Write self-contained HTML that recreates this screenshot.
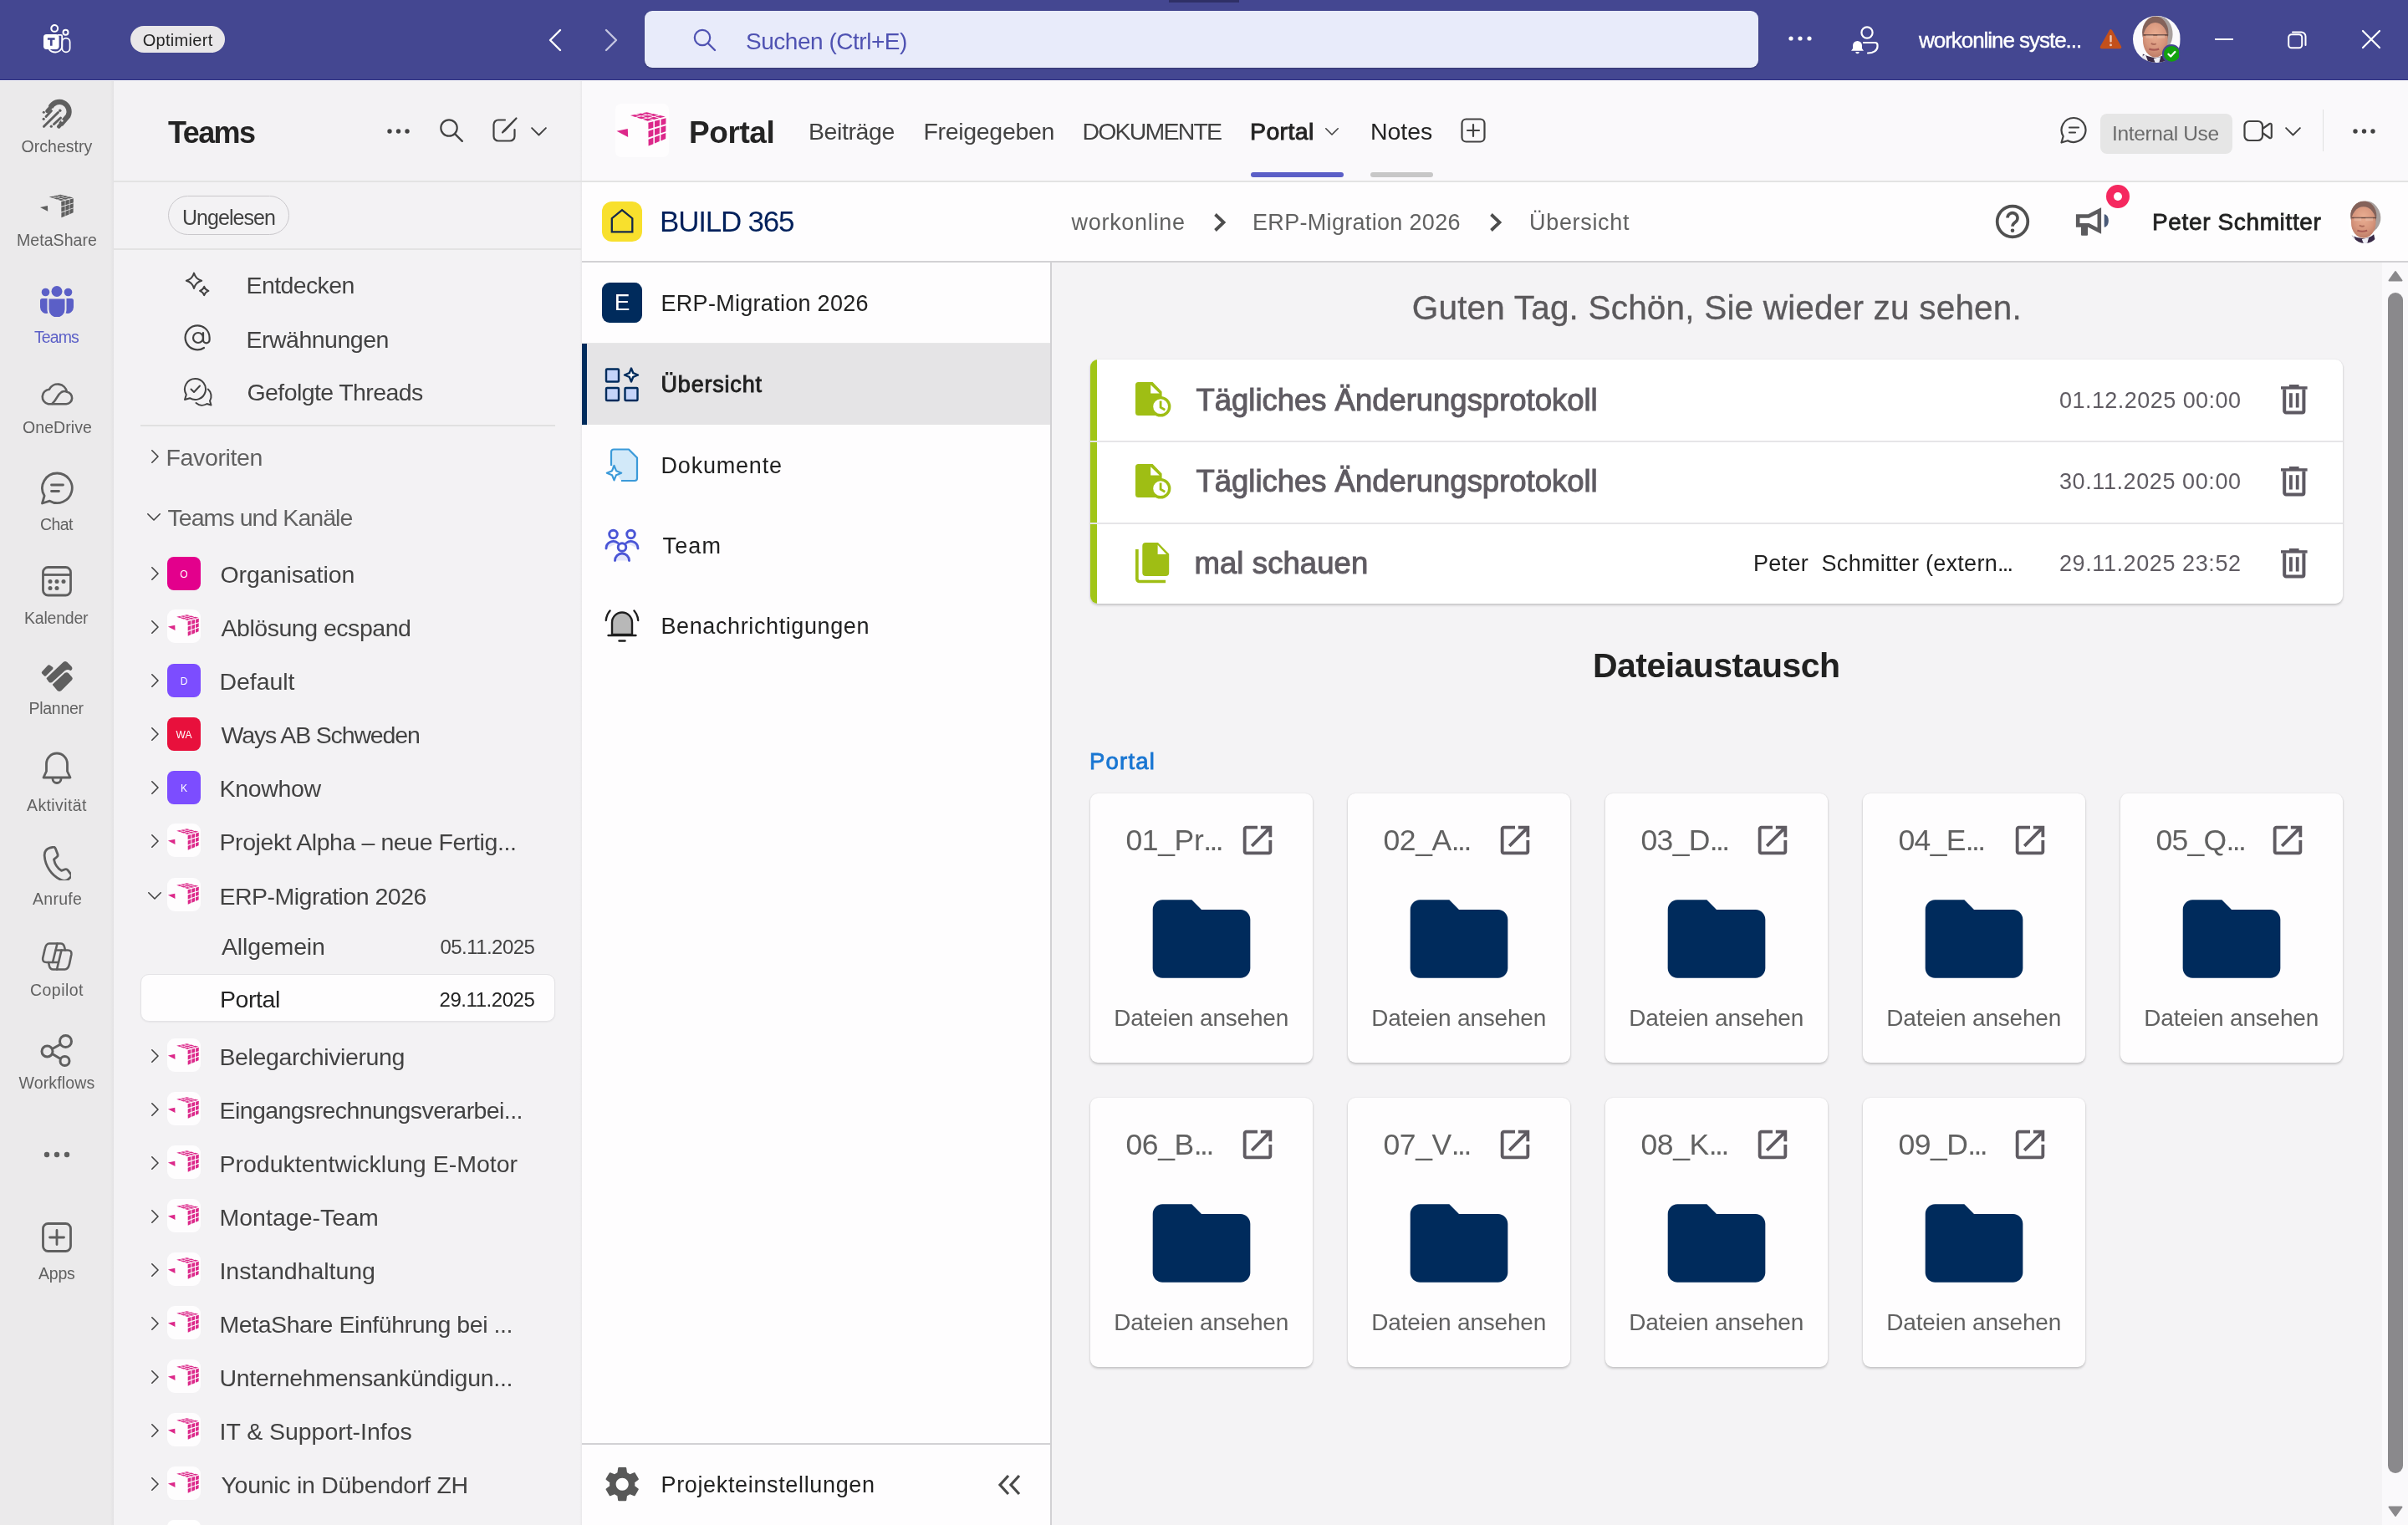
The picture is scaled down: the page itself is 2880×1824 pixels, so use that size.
<!DOCTYPE html><html><head><meta charset="utf-8"><title>Teams</title><style>
html,body{margin:0;padding:0;}html{width:2880px;height:1824px;overflow:hidden;}body{width:2880px;height:1824px;overflow:hidden;position:relative;background:#f5f5f5;font-family:"Liberation Sans",sans-serif;}
.t{position:absolute;white-space:pre;}
</style></head><body>
<svg width="0" height="0" style="position:absolute"><defs><symbol id="cubeP" viewBox="0 0 64 64"><g fill="#dc288a"><path d="M1.5 32.7 L14.8 29.9 L15.2 39.9 Z"/><path d="M17.92 14.10 L23.49 12.98 L29.46 14.77 L23.78 15.99 Z"/><path d="M25.34 16.49 L31.05 15.25 L37.02 17.03 L31.20 18.37 Z"/><path d="M32.75 18.87 L38.61 17.51 L44.58 19.29 L38.62 20.75 Z"/><path d="M24.97 12.69 L30.54 11.57 L36.65 13.23 L30.97 14.45 Z"/><path d="M32.57 14.92 L38.28 13.67 L44.39 15.34 L38.57 16.68 Z"/><path d="M40.16 17.14 L46.01 15.78 L52.13 17.44 L46.16 18.90 Z"/><path d="M32.02 11.27 L37.59 10.15 L43.85 11.69 L38.16 12.91 Z"/><path d="M39.80 13.34 L45.51 12.10 L51.76 13.64 L45.94 14.98 Z"/><path d="M47.57 15.42 L53.42 14.05 L59.67 15.59 L53.71 17.05 Z"/><path d="M39.40 22.66 L45.37 21.15 L45.38 28.80 L39.45 30.57 Z"/><path d="M39.46 32.68 L45.38 30.84 L45.39 38.49 L39.51 40.60 Z"/><path d="M39.52 42.70 L45.39 40.52 L45.39 48.18 L39.57 50.62 Z"/><path d="M46.96 20.75 L52.93 19.24 L52.89 26.56 L46.95 28.33 Z"/><path d="M46.95 30.35 L52.87 28.50 L52.83 35.82 L46.95 37.93 Z"/><path d="M46.95 39.95 L52.81 37.77 L52.77 45.09 L46.94 47.53 Z"/><path d="M54.52 18.83 L60.49 17.32 L60.39 24.31 L54.46 26.08 Z"/><path d="M54.45 28.01 L60.37 26.17 L60.27 33.16 L54.39 35.26 Z"/><path d="M54.37 37.19 L60.24 35.01 L60.14 42.00 L54.31 44.44 Z"/></g></symbol><symbol id="cubeG" viewBox="0 0 64 64"><g fill="#5e5e5e"><path d="M1.5 32.7 L14.8 29.9 L15.2 39.9 Z"/><path d="M17.35 14.07 L23.47 12.84 L30.04 14.80 L23.79 16.14 Z"/><path d="M24.77 16.46 L31.03 15.10 L37.60 17.05 L31.20 18.53 Z"/><path d="M32.18 18.84 L38.60 17.35 L45.17 19.31 L38.61 20.92 Z"/><path d="M24.40 12.66 L30.51 11.43 L37.24 13.25 L30.99 14.59 Z"/><path d="M31.99 14.89 L38.26 13.53 L44.98 15.35 L38.58 16.83 Z"/><path d="M39.58 17.12 L46.00 15.63 L52.72 17.45 L46.17 19.06 Z"/><path d="M31.44 11.24 L37.56 10.02 L44.43 11.71 L38.19 13.05 Z"/><path d="M39.21 13.32 L45.48 11.96 L52.36 13.65 L45.95 15.13 Z"/><path d="M46.98 15.40 L53.40 13.91 L60.28 15.59 L53.72 17.21 Z"/><path d="M39.10 22.34 L45.67 20.69 L45.67 29.09 L39.16 31.05 Z"/><path d="M39.17 32.38 L45.67 30.37 L45.68 38.76 L39.22 41.09 Z"/><path d="M39.23 42.42 L45.68 40.04 L45.68 48.44 L39.28 51.13 Z"/><path d="M46.67 20.44 L53.23 18.80 L53.18 26.83 L46.66 28.79 Z"/><path d="M46.66 30.06 L53.17 28.05 L53.11 36.08 L46.66 38.41 Z"/><path d="M46.66 39.68 L53.11 37.30 L53.05 45.33 L46.65 48.03 Z"/><path d="M54.23 18.55 L60.79 16.91 L60.68 24.57 L54.17 26.53 Z"/><path d="M54.16 27.74 L60.66 25.73 L60.55 33.40 L54.10 35.73 Z"/><path d="M54.09 36.94 L60.53 34.56 L60.42 42.22 L54.02 44.92 Z"/></g></symbol><symbol id="folder" viewBox="0 0 24 24"><path fill="#002b5c" d="M10 4H4c-1.1 0-1.99.9-1.99 2L2 18c0 1.1.9 2 2 2h16c1.1 0 2-.9 2-2V8c0-1.1-.9-2-2-2h-8l-2-2z"/></symbol><symbol id="openNew" viewBox="0 0 24 24"><path fill="#5f5b62" d="M19 19H5V5h7V3H5c-1.11 0-2 .9-2 2v14c0 1.1.89 2 2 2h14c1.1 0 2-.9 2-2v-7h-2v7zM14 3v2h3.59l-9.83 9.83 1.41 1.41L19 6.41V10h2V3h-7z"/></symbol><symbol id="trash" viewBox="0 0 32 36"><g fill="#5d5962"><rect x="0" y="2.200" width="31.600" height="3.400"/><rect x="10" y="0" width="11.600" height="3"/><rect x="10" y="10.200" width="3.800" height="17.300"/><rect x="17.800" y="10.200" width="3.800" height="17.300"/></g><path d="M4.200 5.500V31.400a2 2 0 0 0 2 2H25.400a2 2 0 0 0 2-2V5.500" fill="none" stroke="#5d5962" stroke-width="4"/></symbol><symbol id="chevR" viewBox="0 0 12 20"><path fill="none" stroke="#424242" stroke-width="1.8" stroke-linecap="round" stroke-linejoin="round" d="M2 2l8 8-8 8"/></symbol><symbol id="chevD" viewBox="0 0 20 12"><path fill="none" stroke="#424242" stroke-width="1.8" stroke-linecap="round" stroke-linejoin="round" d="M2 2l8 8 8-8"/></symbol></defs></svg>
<div style="position:absolute;left:0;top:0;width:2880px;height:1824px;overflow:hidden;will-change:transform;">
<div style="position:absolute;left:0px;top:0px;width:2880px;height:96px;background:#444791;"></div>
<div style="position:absolute;left:0px;top:96px;width:136px;height:1728px;background:linear-gradient(90deg,#ebeaeb 0,#ebeaeb 132px,#e2e1e3 136px);"></div>
<div style="position:absolute;left:136px;top:96px;width:559px;height:1728px;background:#f3f2f4;"></div>
<div style="position:absolute;left:695px;top:96px;width:2185px;height:121px;background:#faf9fb;"></div>
<div style="position:absolute;left:693px;top:96px;width:3px;height:1728px;background:linear-gradient(90deg,#f3f2f4,#e9e8ea);"></div>
<div style="position:absolute;left:136px;top:216px;width:2744px;height:2px;background:#e3e3e3;"></div>
<div style="position:absolute;left:0px;top:95px;width:2880px;height:1px;background:#2f3083;"></div>
<div style="position:absolute;left:0px;top:96px;width:2880px;height:1px;background:#fff;"></div>
<svg style="position:absolute;left:51.6px;top:29.2px;" width="34" height="35" viewBox="0 0 34 35"><g fill="none" stroke="#fff" stroke-width="1.800"><circle cx="13.200" cy="4.900" r="3.900" stroke-width="2.100"/><circle cx="26.500" cy="9.700" r="3" stroke-width="2"/><path d="M17 12.900h3.800a1.400 1.400 0 0 1 1.400 1.400v12.500a7.800 7.800 0 0 1-8 6.700c-3.200 0-5.800-1.300-7.600-3.600"/><rect x="22.300" y="16.600" width="9.300" height="16.700" rx="4.600"/></g><rect x="0" y="11.900" width="18.600" height="18" rx="3.600" fill="#fff"/><path d="M4.900 16.300h8.700v2.500h-3v6.900h-2.700v-6.900h-3z" fill="#444791"/></svg>
<div style="position:absolute;left:156px;top:30.7px;width:113.4px;height:32.4px;background:#e9e7e9;border-radius:17px;"></div>
<span class="t" style="top:35.0px;font-size:20px;line-height:26px;color:#242424;letter-spacing:0.304px;left:170.70px;">Optimiert</span>
<svg style="position:absolute;left:655px;top:34px;" width="18" height="28" viewBox="0 0 18 28"><path d="M15 2L3 14l12 12" fill="none" stroke="#fff" stroke-width="2.4" stroke-linecap="round" stroke-linejoin="round"/></svg>
<svg style="position:absolute;left:722px;top:34px;" width="18" height="28" viewBox="0 0 18 28"><path d="M3 2l12 12L3 26" fill="none" stroke="#c5c6e0" stroke-width="2.4" stroke-linecap="round" stroke-linejoin="round"/></svg>
<div style="position:absolute;left:771px;top:13px;width:1332px;height:68px;background:#e8ebfa;border-radius:9px;box-shadow:0 1px 2px rgba(0,0,0,.25);"></div>
<svg style="position:absolute;left:828px;top:33px;" width="30" height="30" viewBox="0 0 30 30"><circle cx="12" cy="12" r="9.2" fill="none" stroke="#4f52b2" stroke-width="2.2"/><path d="M19 19l8 8" stroke="#4f52b2" stroke-width="2.4" stroke-linecap="round"/></svg>
<span class="t" style="top:32.0px;font-size:28px;line-height:36px;color:#4f52b2;letter-spacing:-0.474px;left:892.00px;">Suchen (Ctrl+E)</span>
<div style="position:absolute;left:1398px;top:0px;width:84px;height:3px;background:#2f3066;"></div>
<svg style="position:absolute;left:2138px;top:41px;" width="30" height="10" viewBox="0 0 30 10"><circle cx="4" cy="5" r="2.6" fill="#fff"/><circle cx="15" cy="5" r="2.6" fill="#fff"/><circle cx="26" cy="5" r="2.6" fill="#fff"/></svg>
<svg style="position:absolute;left:2212px;top:30px;" width="38" height="36" viewBox="0 0 38 36"><circle cx="21" cy="9" r="6.6" fill="none" stroke="#fff" stroke-width="2.2"/><path d="M17 21h13.500a3 3 0 0 1 3 3v1.500c0 5-5 8-11.500 8" fill="none" stroke="#fff" stroke-width="2.2" stroke-linecap="round"/><path d="M9.500 19a5.500 5.500 0 0 1 5.500 5.500V28l2 2.800H2L4 28v-3.500A5.500 5.500 0 0 1 9.500 19zM7.300 32h4.400a2.200 2.200 0 0 1-4.400 0z" fill="#fff"/></svg>
<span class="t" style="top:31.0px;font-size:26px;line-height:34px;color:#fff;letter-spacing:-1.036px;left:2295.00px;-webkit-text-stroke:0.4px #fff;">workonline syste...</span>
<svg style="position:absolute;left:2510.5px;top:33.5px;" width="27" height="25" viewBox="0 0 27 25"><path d="M13.500 3L24.500 22.500H2.500z" fill="#c4501b" stroke="#c4501b" stroke-width="3.600" stroke-linejoin="round"/><rect x="12.300" y="8" width="2.400" height="8.500" rx="1" fill="#f0c8b4"/><circle cx="13.500" cy="19.800" r="1.500" fill="#f0c8b4"/></svg>
<div style="position:absolute;left:2551px;top:18.500px;width:56.500px;height:56.500px;border-radius:50%;overflow:hidden;"><svg width="56.500" height="56.500" viewBox="0 0 57 57"><defs><radialGradient id="skinG" cx="0.5" cy="0.35" r="0.7"><stop offset="0" stop-color="#eaae92"/><stop offset="0.6" stop-color="#d6957c"/><stop offset="1" stop-color="#b87763"/></radialGradient></defs><rect width="57" height="57" fill="#fbfafc"/><path d="M12 46Q19 50 27 50.500Q35 50 39.500 45L42 57H11z" fill="#3a2b48"/><path d="M25 51.500L33.500 49.500L31.500 57H27z" fill="#eeeef6"/><path d="M11 49l4-2.500 4 10.500H8z" fill="#e8e8f0"/><ellipse cx="31.500" cy="22" rx="16.500" ry="21.500" fill="#a8a09e"/><ellipse cx="27" cy="20" rx="15.800" ry="19.500" fill="#84625a"/><ellipse cx="27" cy="29" rx="15" ry="21" fill="url(#skinG)"/><path d="M12.500 23h30" stroke="#6a4a42" stroke-width="1.700"/><path d="M15.500 23h9v4h-9zM29.500 23h9v4h-9z" fill="#f0d0c0" opacity=".35"/><path d="M22 33q3 2.500 6 .500" stroke="#9a5648" stroke-width="2" fill="none" opacity=".7"/><path d="M19.500 40q6 2 12 0" stroke="#a85a54" stroke-width="2.200" fill="none"/></svg></div>
<div style="position:absolute;left:2585.600px;top:53.300px;width:22.600px;height:22.600px;border-radius:50%;background:#444791;"></div>
<svg style="position:absolute;left:2587.5px;top:55.2px;" width="18.8" height="18.8" viewBox="0 0 18 18"><circle cx="9" cy="9" r="9" fill="#13a10e"/><path d="M5.200 9.300l2.700 2.700L12.800 6.700" fill="none" stroke="#fff" stroke-width="2.200" stroke-linecap="round" stroke-linejoin="round"/></svg>
<div style="position:absolute;left:2649px;top:46px;width:22px;height:2px;background:#fff;"></div>
<svg style="position:absolute;left:2736px;top:36px;" width="24" height="24" viewBox="0 0 24 24"><rect x="1.200" y="5.200" width="16" height="16" rx="3.500" fill="none" stroke="#fff" stroke-width="2"/><path d="M6 2.500h10.500a5 5 0 0 1 5 5V18" fill="none" stroke="#fff" stroke-width="2" stroke-linecap="round"/></svg>
<svg style="position:absolute;left:2824px;top:35px;" width="24" height="24" viewBox="0 0 24 24"><path d="M2 2l20 20M22 2L2 22" stroke="#fff" stroke-width="2.200" stroke-linecap="round"/></svg>
<svg style="position:absolute;left:48px;top:116px;" width="40" height="40" viewBox="0 0 40 40"><g fill="none" stroke="#5f5f5f" stroke-linecap="round"><path d="M12.500 12.500A11 11 0 1 1 33.500 22.500L24.500 33" stroke-width="6.200" stroke-linecap="butt"/><path d="M12.500 12.500L8.500 16.800" stroke-width="4.600"/><path d="M13.500 16.500L7 23.500" stroke-width="2.800"/><path d="M21.500 18.500L4.500 35.300" stroke-width="3"/><path d="M24.500 25L16.500 32.500" stroke-width="3"/><path d="M24.500 33l-2.200 2.300" stroke-width="4.600"/></g><g fill="#5f5f5f"><circle cx="4.300" cy="18.300" r="1.500"/><circle cx="4.200" cy="26.300" r="1.600"/><circle cx="13.300" cy="35.200" r="1.600"/><circle cx="23.800" cy="16.200" r="1.700"/></g><circle cx="26.300" cy="28.400" r="1.300" fill="#ebeaeb"/></svg>
<span class="t" style="top:163.0px;font-size:19.5px;line-height:25px;color:#616161;letter-spacing:0.030px;left:25.50px;">Orchestry</span>
<svg style="position:absolute;left:47px;top:226px" width="43" height="43"><use href="#cubeG" width="43" height="43"/></svg>
<span class="t" style="top:275.0px;font-size:19.5px;line-height:25px;color:#616161;letter-spacing:0.057px;left:20.00px;">MetaShare</span>
<svg style="position:absolute;left:48px;top:341px;" width="40" height="38" viewBox="0 0 40 38"><g fill="#5b5fc7"><circle cx="20" cy="7.500" r="6.500"/><circle cx="6.500" cy="8.500" r="4.800"/><circle cx="33.500" cy="8.500" r="4.800"/><path d="M10.500 16.500h19v12.500a9.500 9.500 0 0 1-19 0z"/><path d="M0 18.500a2.500 2.500 0 0 1 2.500-2.500h6v13c0 2 .400 3.400 1 4.600A7.500 7.500 0 0 1 0 26.500z"/><path d="M40 18.500a2.500 2.500 0 0 0-2.500-2.500h-6v13c0 2-.400 3.400-1 4.600A7.500 7.500 0 0 0 40 26.500z"/></g></svg>
<span class="t" style="top:391.0px;font-size:19.5px;line-height:25px;color:#5b5fc7;letter-spacing:-0.921px;left:41.00px;">Teams</span>
<svg style="position:absolute;left:48px;top:456px;" width="40" height="32" viewBox="0 0 40 32"><g fill="none" stroke="#5f5f5f" stroke-width="2.600" stroke-linecap="round" stroke-linejoin="round"><path d="M9.800 27.200H31.200a7.300 7.300 0 0 0 .800-14.500A11.300 11.300 0 0 0 10.800 9.800 8.800 8.800 0 0 0 9.800 27.200z"/><path d="M14.500 26.800C20.500 21.500 20.500 16 25.500 13Q28.500 11.300 32 12.600"/><path d="M10.800 9.800q-2.500 5 .500 9.500" opacity=".0"/></g></svg>
<span class="t" style="top:499.0px;font-size:19.5px;line-height:25px;color:#616161;letter-spacing:0.069px;left:27.00px;">OneDrive</span>
<svg style="position:absolute;left:48px;top:564px;" width="40" height="41" viewBox="0 0 40 41"><g fill="none" stroke="#5f5f5f" stroke-width="2.800" stroke-linecap="round" stroke-linejoin="round"><path d="M20.500 2A17.800 17.800 0 1 1 11.500 35.200L2.500 38l2.600-9A17.800 17.800 0 0 1 20.500 2z"/><path d="M13.500 16h14M13.500 23.500h9"/></g></svg>
<span class="t" style="top:615.0px;font-size:19.5px;line-height:25px;color:#616161;letter-spacing:-0.591px;left:48.00px;">Chat</span>
<svg style="position:absolute;left:50px;top:677px;" width="36" height="37" viewBox="0 0 36 37"><rect x="1.500" y="1.500" width="33" height="33.500" rx="6" fill="none" stroke="#5f5f5f" stroke-width="2.800"/><path d="M2 10.500h32" stroke="#5f5f5f" stroke-width="2.800"/><g fill="#5f5f5f"><circle cx="10" cy="18.500" r="2.500"/><circle cx="18" cy="18.500" r="2.500"/><circle cx="26" cy="18.500" r="2.500"/><circle cx="10" cy="26.500" r="2.500"/><circle cx="18" cy="26.500" r="2.500"/></g></svg>
<span class="t" style="top:727.0px;font-size:19.5px;line-height:25px;color:#616161;letter-spacing:-0.223px;left:29.00px;">Kalender</span>
<svg style="position:absolute;left:48px;top:789px;" width="40" height="40" viewBox="0 0 40 40"><g fill="#5f5f5f" stroke="#5f5f5f" stroke-linejoin="round"><path d="M3.500 15.500L10.500 8l3.300 2.200L6 18z" stroke-width="3.400"/><path d="M8.500 22.500L28.500 3.500q1.500-1 3 0L37 9q1.200 1.500-.500 3.200-3.500-2-7 0L13.500 26.500q-1.500.500-2.500-.500z" stroke-width="1.800"/><path d="M15.800 30L30 16.600q2-1 3.500.400l4 4.500q.800 1 0 2L24.500 36.600q-1.500 1-3 0z" stroke-width="1.800"/></g></svg>
<span class="t" style="top:834.5px;font-size:19.5px;line-height:25px;color:#616161;letter-spacing:-0.286px;left:34.50px;">Planner</span>
<svg style="position:absolute;left:50px;top:899px;" width="36" height="41" viewBox="0 0 36 41"><g fill="none" stroke="#5f5f5f" stroke-width="2.800" stroke-linecap="round" stroke-linejoin="round"><path d="M18 2a12.500 12.500 0 0 1 12.500 12.500v9l3.500 7.500H2l3.500-7.500v-9A12.500 12.500 0 0 1 18 2z"/><path d="M13 32.500a5 5 0 0 0 10 0"/></g></svg>
<span class="t" style="top:951.0px;font-size:19.5px;line-height:25px;color:#616161;letter-spacing:0.394px;left:32.00px;">Aktivität</span>
<svg style="position:absolute;left:51px;top:1012px;" width="34" height="41" viewBox="0 0 34 41"><path d="M8.500 2.200l3.300-.900a3 3 0 0 1 3.600 1.800l2.500 6.500a3 3 0 0 1-.900 3.400l-3.500 2.900c1 5.500 4.500 10.500 9 13.500l4.300-1.600a3 3 0 0 1 3.400 1l3.300 4.500a3 3 0 0 1-.300 3.900l-2 2c-2.500 2.400-6 2.600-9.500 1C10.500 35.200 3 23.500 2.200 11.500 2 7 4.500 3.400 8.500 2.200z" fill="none" stroke="#5f5f5f" stroke-width="2.800" stroke-linejoin="round"/></svg>
<span class="t" style="top:1063.0px;font-size:19.5px;line-height:25px;color:#616161;letter-spacing:0.278px;left:39.00px;">Anrufe</span>
<svg style="position:absolute;left:48px;top:1126px;" width="40" height="37" viewBox="0 0 40 37"><g fill="none" stroke="#5f5f5f" stroke-width="2.600" stroke-linejoin="round" stroke-linecap="round"><path d="M11 2.500H20.500L15 25H7.500Q2.500 25 3.200 20L5.700 9Q7 2.500 11 2.500z"/><path d="M25.500 10.500H33Q38 10.500 37.400 15.500L35 27Q33.500 33.500 29.500 33.500H20z"/><path d="M20.500 2.500H24.500Q28 2.500 29 6.500L30 10.500"/><path d="M10 25l1 4.500Q12 33.500 15.500 33.500H20"/><path d="M18.600 10.500H25.500M15 25h7"/></g></svg>
<span class="t" style="top:1171.5px;font-size:19.5px;line-height:25px;color:#616161;letter-spacing:0.453px;left:36.00px;">Copilot</span>
<svg style="position:absolute;left:48px;top:1236px;" width="40" height="41" viewBox="0 0 40 41"><g fill="none" stroke="#5f5f5f" stroke-width="3"><circle cx="30.500" cy="9.500" r="7"/><circle cx="8.500" cy="21.500" r="6.500"/><circle cx="29.500" cy="33" r="5.500"/><path d="M14.500 18.500l10-5.500M14.500 24.500l10 6"/></g></svg>
<span class="t" style="top:1282.5px;font-size:19.5px;line-height:25px;color:#616161;letter-spacing:0.148px;left:22.50px;">Workflows</span>
<svg style="position:absolute;left:52px;top:1376px;" width="32" height="10" viewBox="0 0 32 10"><circle cx="4" cy="5" r="3.200" fill="#5f5f5f"/><circle cx="16" cy="5" r="3.200" fill="#5f5f5f"/><circle cx="28" cy="5" r="3.200" fill="#5f5f5f"/></svg>
<svg style="position:absolute;left:50px;top:1462px;" width="36" height="36" viewBox="0 0 36 36"><rect x="1.500" y="1.500" width="33" height="33" rx="6" fill="none" stroke="#5f5f5f" stroke-width="2.800"/><path d="M18 9.500v17M9.500 18h17" stroke="#5f5f5f" stroke-width="2.800" stroke-linecap="round"/></svg>
<span class="t" style="top:1510.5px;font-size:19.5px;line-height:25px;color:#616161;letter-spacing:-0.232px;left:46.00px;">Apps</span>
<span class="t" style="top:134.5px;font-size:36px;line-height:47px;color:#242424;font-weight:700;letter-spacing:-1.593px;left:201.00px;">Teams</span>
<svg style="position:absolute;left:462px;top:152px;" width="30" height="10" viewBox="0 0 30 10"><circle cx="4" cy="5" r="2.700" fill="#424242"/><circle cx="14.500" cy="5" r="2.700" fill="#424242"/><circle cx="25" cy="5" r="2.700" fill="#424242"/></svg>
<svg style="position:absolute;left:525px;top:141px;" width="30" height="30" viewBox="0 0 30 30"><circle cx="12" cy="12" r="9.700" fill="none" stroke="#424242" stroke-width="2.200"/><path d="M19.300 19.300l8.500 8.500" stroke="#424242" stroke-width="2.400" stroke-linecap="round"/></svg>
<svg style="position:absolute;left:588px;top:139px;" width="32" height="32" viewBox="0 0 32 32"><g fill="none" stroke="#424242" stroke-width="2.200" stroke-linecap="round" stroke-linejoin="round"><path d="M16 4.500H8a5.500 5.500 0 0 0-5.500 5.500v14A5.500 5.500 0 0 0 8 29.500h14a5.500 5.500 0 0 0 5.500-5.500v-8"/><path d="M29.500 2.500L15 17l-2 2.500 2.500-2z"/></g></svg>
<svg style="position:absolute;left:634px;top:151px" width="21" height="12.6"><use href="#chevD" width="21" height="12.6"/></svg>
<div style="position:absolute;left:200.5px;top:234px;width:143px;height:44.5px;border:1.500px solid #c9c7cb;border-radius:24px;"></div>
<span class="t" style="top:243.5px;font-size:25px;line-height:32px;color:#424242;letter-spacing:-0.953px;left:218.00px;">Ungelesen</span>
<div style="position:absolute;left:136px;top:297px;width:559px;height:2px;background:#e3e3e3;"></div>
<svg style="position:absolute;left:221px;top:325px;" width="32" height="32" viewBox="0 0 32 32"><g fill="none" stroke="#424242" stroke-width="2" stroke-linejoin="round"><path d="M11 1.6000000000000014Q12.84 8.96 20.2 10.8Q12.84 12.64 11 20.0Q9.16 12.64 1.8000000000000007 10.8Q9.16 8.96 11 1.6000000000000014z"/><path d="M23.2 17.7Q24.5 21.599999999999998 28.4 22.9Q24.5 24.2 23.2 28.099999999999998Q21.9 24.2 18.0 22.9Q21.9 21.599999999999998 23.2 17.7z"/></g></svg>
<span class="t" style="top:323.3px;font-size:28.5px;line-height:37px;color:#424242;letter-spacing:-0.604px;left:294.50px;">Entdecken</span>
<svg style="position:absolute;left:219.5px;top:387px;" width="34" height="34" viewBox="0 0 34 34"><g fill="none" stroke="#424242" stroke-width="2.200" stroke-linecap="round"><circle cx="17" cy="17" r="6"/><path d="M23 11v8.500a3.800 3.800 0 0 0 7.600 0V17A14.500 14.500 0 1 0 24 29"/></g></svg>
<span class="t" style="top:387.8px;font-size:28.5px;line-height:37px;color:#424242;letter-spacing:-0.503px;left:294.50px;">Erwähnungen</span>
<svg style="position:absolute;left:219px;top:451px;" width="36" height="36" viewBox="0 0 36 36"><g fill="none" stroke="#424242" stroke-width="2" stroke-linecap="round" stroke-linejoin="round"><path d="M14.500 2A12.500 12.500 0 1 1 8 25.200L2 27l1.800-6A12.500 12.500 0 0 1 14.500 2z"/><path d="M9.500 14.500l3.500 3.500 7-7.500"/><path d="M29.800 14.500A11 11 0 0 1 32 28.500l1.500 5-5-1.500a11 11 0 0 1-13-1"/></g></svg>
<span class="t" style="top:451.3px;font-size:28.5px;line-height:37px;color:#424242;letter-spacing:-0.597px;left:295.50px;">Gefolgte Threads</span>
<div style="position:absolute;left:168px;top:508px;width:496px;height:2px;background:#e0e0e0;"></div>
<svg style="position:absolute;left:180px;top:537px" width="10.8" height="18"><use href="#chevR" width="10.8" height="18"/></svg>
<span class="t" style="top:529.3px;font-size:28.5px;line-height:37px;color:#616161;letter-spacing:-0.369px;left:198.50px;">Favoriten</span>
<svg style="position:absolute;left:175px;top:613px" width="18" height="10.8"><use href="#chevD" width="18" height="10.8"/></svg>
<span class="t" style="top:601.3px;font-size:28.5px;line-height:37px;color:#616161;letter-spacing:-0.948px;left:200.50px;">Teams und Kanäle</span>
<svg style="position:absolute;left:180px;top:677px" width="10.8" height="18"><use href="#chevR" width="10.8" height="18"/></svg>
<div style="position:absolute;left:200px;top:665.5px;width:40px;height:40px;border-radius:8px;background:#e3008c;color:#fff;font-size:12px;line-height:43px;text-align:center;overflow:hidden;">O</div>
<span class="t" style="top:669.3px;font-size:28.5px;line-height:37px;color:#424242;letter-spacing:-0.067px;left:263.50px;">Organisation</span>
<svg style="position:absolute;left:180px;top:741px" width="10.8" height="18"><use href="#chevR" width="10.8" height="18"/></svg>
<div style="position:absolute;left:200px;top:729px;width:40px;height:40px;background:#fefdfe;border-radius:9px;"></div>
<svg style="position:absolute;left:200px;top:729px" width="40" height="40"><use href="#cubeP" width="40" height="40"/></svg>
<span class="t" style="top:733.3px;font-size:28.5px;line-height:37px;color:#424242;letter-spacing:-0.477px;left:264.50px;">Ablösung ecspand</span>
<svg style="position:absolute;left:180px;top:805px" width="10.8" height="18"><use href="#chevR" width="10.8" height="18"/></svg>
<div style="position:absolute;left:200px;top:793.5px;width:40px;height:40px;border-radius:8px;background:#7c4dff;color:#fff;font-size:12px;line-height:43px;text-align:center;overflow:hidden;">D</div>
<span class="t" style="top:797.3px;font-size:28.5px;line-height:37px;color:#424242;letter-spacing:-0.064px;left:262.50px;">Default</span>
<svg style="position:absolute;left:180px;top:869px" width="10.8" height="18"><use href="#chevR" width="10.8" height="18"/></svg>
<div style="position:absolute;left:200px;top:857.5px;width:40px;height:40px;border-radius:8px;background:#e8103c;color:#fff;font-size:12px;line-height:43px;text-align:center;overflow:hidden;">WA</div>
<span class="t" style="top:861.3px;font-size:28.5px;line-height:37px;color:#424242;letter-spacing:-1.153px;left:264.50px;">Ways AB Schweden</span>
<svg style="position:absolute;left:180px;top:933px" width="10.8" height="18"><use href="#chevR" width="10.8" height="18"/></svg>
<div style="position:absolute;left:200px;top:921.5px;width:40px;height:40px;border-radius:8px;background:#7c4dff;color:#fff;font-size:12px;line-height:43px;text-align:center;overflow:hidden;">K</div>
<span class="t" style="top:925.3px;font-size:28.5px;line-height:37px;color:#424242;letter-spacing:-0.332px;left:262.50px;">Knowhow</span>
<svg style="position:absolute;left:180px;top:997px" width="10.8" height="18"><use href="#chevR" width="10.8" height="18"/></svg>
<div style="position:absolute;left:200px;top:985px;width:40px;height:40px;background:#fefdfe;border-radius:9px;"></div>
<svg style="position:absolute;left:200px;top:985px" width="40" height="40"><use href="#cubeP" width="40" height="40"/></svg>
<span class="t" style="top:989.3px;font-size:28.5px;line-height:37px;color:#424242;letter-spacing:-0.421px;left:262.50px;">Projekt Alpha – neue Fertig...</span>
<svg style="position:absolute;left:176px;top:1065.5px" width="18" height="10.8"><use href="#chevD" width="18" height="10.8"/></svg>
<div style="position:absolute;left:200px;top:1049.5px;width:40px;height:40px;background:#fefdfe;border-radius:9px;"></div>
<svg style="position:absolute;left:200px;top:1049.5px" width="40" height="40"><use href="#cubeP" width="40" height="40"/></svg>
<span class="t" style="top:1053.8px;font-size:28.5px;line-height:37px;color:#424242;letter-spacing:-0.516px;left:262.50px;">ERP-Migration 2026</span>
<span class="t" style="top:1113.8px;font-size:28.5px;line-height:37px;color:#424242;letter-spacing:-0.162px;left:265.00px;">Allgemein</span>
<span class="t" style="top:1116.8px;font-size:24px;line-height:31px;color:#424242;letter-spacing:-0.554px;left:526.50px;">05.11.2025</span>
<div style="position:absolute;left:167.5px;top:1164.5px;width:494px;height:55.5px;background:#fefdfe;border:1.500px solid #e4e3e6;border-radius:10px;box-shadow:0 1px 2px rgba(0,0,0,.05);"></div>
<span class="t" style="top:1177.3px;font-size:28.5px;line-height:37px;color:#242424;letter-spacing:-0.424px;left:263.00px;">Portal</span>
<span class="t" style="top:1180.3px;font-size:24px;line-height:31px;color:#242424;letter-spacing:-0.443px;left:525.50px;">29.11.2025</span>
<svg style="position:absolute;left:180px;top:1253.5px" width="10.8" height="18"><use href="#chevR" width="10.8" height="18"/></svg>
<div style="position:absolute;left:200px;top:1241.5px;width:40px;height:40px;background:#fefdfe;border-radius:9px;"></div>
<svg style="position:absolute;left:200px;top:1241.5px" width="40" height="40"><use href="#cubeP" width="40" height="40"/></svg>
<span class="t" style="top:1245.8px;font-size:28.5px;line-height:37px;color:#424242;letter-spacing:-0.393px;left:262.50px;">Belegarchivierung</span>
<svg style="position:absolute;left:180px;top:1317.5px" width="10.8" height="18"><use href="#chevR" width="10.8" height="18"/></svg>
<div style="position:absolute;left:200px;top:1305.5px;width:40px;height:40px;background:#fefdfe;border-radius:9px;"></div>
<svg style="position:absolute;left:200px;top:1305.5px" width="40" height="40"><use href="#cubeP" width="40" height="40"/></svg>
<span class="t" style="top:1309.8px;font-size:28.5px;line-height:37px;color:#424242;letter-spacing:-0.583px;left:262.50px;">Eingangsrechnungsverarbei...</span>
<svg style="position:absolute;left:180px;top:1381.5px" width="10.8" height="18"><use href="#chevR" width="10.8" height="18"/></svg>
<div style="position:absolute;left:200px;top:1369.5px;width:40px;height:40px;background:#fefdfe;border-radius:9px;"></div>
<svg style="position:absolute;left:200px;top:1369.5px" width="40" height="40"><use href="#cubeP" width="40" height="40"/></svg>
<span class="t" style="top:1373.8px;font-size:28.5px;line-height:37px;color:#424242;letter-spacing:0.004px;left:262.50px;">Produktentwicklung E-Motor</span>
<svg style="position:absolute;left:180px;top:1445.5px" width="10.8" height="18"><use href="#chevR" width="10.8" height="18"/></svg>
<div style="position:absolute;left:200px;top:1433.5px;width:40px;height:40px;background:#fefdfe;border-radius:9px;"></div>
<svg style="position:absolute;left:200px;top:1433.5px" width="40" height="40"><use href="#cubeP" width="40" height="40"/></svg>
<span class="t" style="top:1437.8px;font-size:28.5px;line-height:37px;color:#424242;letter-spacing:0.013px;left:262.50px;">Montage-Team</span>
<svg style="position:absolute;left:180px;top:1509.5px" width="10.8" height="18"><use href="#chevR" width="10.8" height="18"/></svg>
<div style="position:absolute;left:200px;top:1497.5px;width:40px;height:40px;background:#fefdfe;border-radius:9px;"></div>
<svg style="position:absolute;left:200px;top:1497.5px" width="40" height="40"><use href="#cubeP" width="40" height="40"/></svg>
<span class="t" style="top:1501.8px;font-size:28.5px;line-height:37px;color:#424242;letter-spacing:-0.049px;left:262.50px;">Instandhaltung</span>
<svg style="position:absolute;left:180px;top:1573.5px" width="10.8" height="18"><use href="#chevR" width="10.8" height="18"/></svg>
<div style="position:absolute;left:200px;top:1561.5px;width:40px;height:40px;background:#fefdfe;border-radius:9px;"></div>
<svg style="position:absolute;left:200px;top:1561.5px" width="40" height="40"><use href="#cubeP" width="40" height="40"/></svg>
<span class="t" style="top:1565.8px;font-size:28.5px;line-height:37px;color:#424242;letter-spacing:-0.440px;left:262.50px;">MetaShare Einführung bei ...</span>
<svg style="position:absolute;left:180px;top:1637.5px" width="10.8" height="18"><use href="#chevR" width="10.8" height="18"/></svg>
<div style="position:absolute;left:200px;top:1625.5px;width:40px;height:40px;background:#fefdfe;border-radius:9px;"></div>
<svg style="position:absolute;left:200px;top:1625.5px" width="40" height="40"><use href="#cubeP" width="40" height="40"/></svg>
<span class="t" style="top:1629.8px;font-size:28.5px;line-height:37px;color:#424242;letter-spacing:-0.298px;left:262.50px;">Unternehmensankündigun...</span>
<svg style="position:absolute;left:180px;top:1701.5px" width="10.8" height="18"><use href="#chevR" width="10.8" height="18"/></svg>
<div style="position:absolute;left:200px;top:1689.5px;width:40px;height:40px;background:#fefdfe;border-radius:9px;"></div>
<svg style="position:absolute;left:200px;top:1689.5px" width="40" height="40"><use href="#cubeP" width="40" height="40"/></svg>
<span class="t" style="top:1693.8px;font-size:28.5px;line-height:37px;color:#424242;letter-spacing:-0.031px;left:262.50px;">IT &amp; Support-Infos</span>
<svg style="position:absolute;left:180px;top:1765.5px" width="10.8" height="18"><use href="#chevR" width="10.8" height="18"/></svg>
<div style="position:absolute;left:200px;top:1753.5px;width:40px;height:40px;background:#fefdfe;border-radius:9px;"></div>
<svg style="position:absolute;left:200px;top:1753.5px" width="40" height="40"><use href="#cubeP" width="40" height="40"/></svg>
<span class="t" style="top:1757.8px;font-size:28.5px;line-height:37px;color:#424242;letter-spacing:-0.284px;left:264.50px;">Younic in Dübendorf ZH</span>
<div style="position:absolute;left:200px;top:1818px;width:40px;height:40px;background:#fff;border-radius:8px;"></div>
<div style="position:absolute;left:736px;top:124px;width:64px;height:64px;background:#fefdfe;border-radius:7px;"></div>
<svg style="position:absolute;left:736px;top:124px" width="64" height="64"><use href="#cubeP" width="64" height="64"/></svg>
<span class="t" style="top:134.5px;font-size:37px;line-height:48px;color:#242424;font-weight:700;letter-spacing:-0.416px;left:824.00px;">Portal</span>
<span class="t" style="top:139.0px;font-size:28.5px;line-height:37px;color:#424242;letter-spacing:-0.400px;left:967.00px;">Beiträge</span>
<span class="t" style="top:139.0px;font-size:28.5px;line-height:37px;color:#424242;letter-spacing:-0.318px;left:1104.50px;">Freigegeben</span>
<span class="t" style="top:139.0px;font-size:28.5px;line-height:37px;color:#424242;letter-spacing:-1.823px;left:1294.50px;">DOKUMENTE</span>
<span class="t" style="top:139.0px;font-size:28.5px;line-height:37px;color:#242424;letter-spacing:0.376px;left:1495.00px;-webkit-text-stroke:0.9px #242424;">Portal</span>
<svg style="position:absolute;left:1584px;top:152px" width="18" height="10.8"><use href="#chevD" width="18" height="10.8"/></svg>
<span class="t" style="top:139.0px;font-size:28.5px;line-height:37px;color:#242424;letter-spacing:-0.050px;left:1639.00px;">Notes</span>
<div style="position:absolute;left:1496px;top:206px;width:111px;height:6px;background:#5b5fc7;border-radius:3px;"></div>
<div style="position:absolute;left:1639px;top:206px;width:75px;height:6px;background:#c7c7c7;border-radius:3px;"></div>
<svg style="position:absolute;left:1747px;top:141px;" width="30" height="30" viewBox="0 0 30 30"><rect x="1.500" y="1.500" width="27" height="27" rx="5" fill="none" stroke="#424242" stroke-width="2.200"/><path d="M15 8v14M8 15h14" stroke="#424242" stroke-width="2.200" stroke-linecap="round"/></svg>
<svg style="position:absolute;left:2463px;top:139px;" width="34" height="35" viewBox="0 0 34 35"><g fill="none" stroke="#424242" stroke-width="2.200" stroke-linecap="round" stroke-linejoin="round"><path d="M17.500 2A14.500 14.500 0 1 1 10 29.200L2.500 31.500l2.200-7.500A14.500 14.500 0 0 1 17.500 2z"/><path d="M12 13.500h11M12 19.500h7"/></g></svg>
<div style="position:absolute;left:2512px;top:136px;width:158px;height:48px;background:#e6e6e6;border-radius:8px;"></div>
<span class="t" style="top:143.5px;font-size:24.5px;line-height:32px;color:#6b6b6b;letter-spacing:-0.361px;left:2526.00px;">Internal Use</span>
<svg style="position:absolute;left:2683px;top:143px;" width="36" height="28" viewBox="0 0 36 28"><g fill="none" stroke="#424242" stroke-width="2.200" stroke-linejoin="round"><rect x="1.500" y="2" width="21.500" height="23" rx="5.500"/><path d="M23 11l8.500-6a1.500 1.500 0 0 1 2.300 1.200v14.600a1.500 1.500 0 0 1-2.300 1.200L23 16"/></g></svg>
<svg style="position:absolute;left:2732px;top:151px" width="21" height="12.6"><use href="#chevD" width="21" height="12.6"/></svg>
<div style="position:absolute;left:2778px;top:131px;width:1px;height:50px;background:#e0e0e0;"></div>
<svg style="position:absolute;left:2813px;top:152px;" width="30" height="10" viewBox="0 0 30 10"><circle cx="4" cy="5" r="2.700" fill="#424242"/><circle cx="14.500" cy="5" r="2.700" fill="#424242"/><circle cx="25" cy="5" r="2.700" fill="#424242"/></svg>
<div style="position:absolute;left:696px;top:218px;width:2184px;height:94px;background:#fefdfe;"></div>
<div style="position:absolute;left:696px;top:312px;width:2184px;height:2px;background:#d2d1d4;"></div>
<div style="position:absolute;left:720px;top:241px;width:48px;height:48px;background:#f8e02d;border-radius:12px;"></div>
<svg style="position:absolute;left:720px;top:241px;" width="48" height="48" viewBox="0 0 48 48"><path d="M11.800 36.300V20.200L24 10.200l12.300 10V36.300z" fill="none" stroke="#14284b" stroke-width="2.300" stroke-linejoin="miter"/></svg>
<span class="t" style="top:241.5px;font-size:35px;line-height:46px;color:#00205b;letter-spacing:-1.218px;left:789.00px;">BUILD 365</span>
<span class="t" style="top:248.7px;font-size:27px;line-height:35px;color:#616161;letter-spacing:0.717px;left:1281.50px;">workonline</span>
<svg style="position:absolute;left:1450px;top:254px;" width="18" height="24" viewBox="0 0 18 24"><path d="M3.500 2.500l10 9.500-10 9.500" fill="none" stroke="#4d4d4d" stroke-width="3.800" stroke-linecap="butt" stroke-linejoin="miter"/></svg>
<span class="t" style="top:248.7px;font-size:27px;line-height:35px;color:#616161;letter-spacing:0.317px;left:1498.00px;">ERP-Migration 2026</span>
<svg style="position:absolute;left:1780px;top:254px;" width="18" height="24" viewBox="0 0 18 24"><path d="M3.500 2.500l10 9.500-10 9.500" fill="none" stroke="#4d4d4d" stroke-width="3.800" stroke-linecap="butt" stroke-linejoin="miter"/></svg>
<span class="t" style="top:248.7px;font-size:27px;line-height:35px;color:#616161;letter-spacing:0.683px;left:1829.00px;">Übersicht</span>
<svg style="position:absolute;left:2385px;top:243px;" width="44" height="44" viewBox="0 0 44 44"><circle cx="22" cy="22" r="18.300" fill="none" stroke="#505050" stroke-width="3.700"/><path d="M16 17.500a6 6 0 1 1 9.500 5c-2 1.500-3.500 2.500-3.500 5.200" fill="none" stroke="#505050" stroke-width="3.600"/><circle cx="22" cy="32.700" r="2.300" fill="#505050"/></svg>
<svg style="position:absolute;left:2480px;top:247px;" width="46" height="38" viewBox="0 0 46 38"><path d="M5.200 11.500H18L30.800 5V29L18 22.400H5.200z" fill="none" stroke="#5c5b5e" stroke-width="4.600" stroke-linejoin="miter"/><rect x="9" y="23" width="8" height="11.800" rx="1" fill="#5c5b5e"/><path d="M36.700 9.200A5.200 7.750 0 0 1 36.700 24.700z" fill="#4a5a78"/></svg>
<div style="position:absolute;left:2519px;top:221px;width:28px;height:28px;border-radius:50%;background:#f5285f;"></div>
<div style="position:absolute;left:2528px;top:230px;width:10px;height:10px;border-radius:50%;background:#fff;"></div>
<span class="t" style="top:247.5px;font-size:28px;line-height:36px;color:#212121;letter-spacing:0.634px;left:2574.00px;-webkit-text-stroke:0.8px #212121;">Peter Schmitter</span>
<div style="position:absolute;left:2809px;top:239.500px;width:38.500px;height:51px;border-radius:19px/24px;overflow:hidden;"><svg width="38.500" height="51" viewBox="9 0 39 57" preserveAspectRatio="none"><defs><radialGradient id="skinH" cx="0.5" cy="0.35" r="0.7"><stop offset="0" stop-color="#eaae92"/><stop offset="0.6" stop-color="#d6957c"/><stop offset="1" stop-color="#b87763"/></radialGradient></defs><rect width="57" height="57" fill="#ffffff"/><path d="M12 46Q19 50 27 50.500Q35 50 39.500 45L42 57H11z" fill="#3a2b48"/><path d="M25 51.500L33.500 49.500L31.500 57H27z" fill="#eeeef6"/><path d="M11 49l4-2.500 4 10.500H8z" fill="#e8e8f0"/><ellipse cx="31.500" cy="22" rx="16.500" ry="21.500" fill="#a8a09e"/><ellipse cx="27" cy="20" rx="15.800" ry="19.500" fill="#84625a"/><ellipse cx="27" cy="29" rx="15" ry="21" fill="url(#skinH)"/><path d="M12.500 23h30" stroke="#6a4a42" stroke-width="1.700"/><path d="M15.500 23h9v4h-9zM29.500 23h9v4h-9z" fill="#f0d0c0" opacity=".35"/><path d="M22 33q3 2.500 6 .500" stroke="#9a5648" stroke-width="2" fill="none" opacity=".7"/><path d="M19.500 40q6 2 12 0" stroke="#a85a54" stroke-width="2.200" fill="none"/></svg></div>
<div style="position:absolute;left:696px;top:314px;width:560px;height:1510px;background:#fefdfe;"></div>
<div style="position:absolute;left:1256px;top:314px;width:2px;height:1510px;background:#d2d1d4;"></div>
<div style="position:absolute;left:696px;top:410px;width:560px;height:1px;background:#e8e8e8;"></div>
<div style="position:absolute;left:720px;top:338px;width:48px;height:48px;border-radius:9px;background:#002b5c;color:#fff;font-size:28px;line-height:48px;text-align:center;">E</div>
<span class="t" style="top:345.6px;font-size:27px;line-height:35px;color:#212121;letter-spacing:0.288px;left:790.50px;">ERP-Migration 2026</span>
<div style="position:absolute;left:696px;top:411px;width:560px;height:97px;background:#e5e4e6;"></div>
<div style="position:absolute;left:696px;top:411px;width:6px;height:97px;background:#002b5c;"></div>
<svg style="position:absolute;left:723px;top:439px;" width="42" height="42" viewBox="0 0 42 42"><g fill="#c5d4fa" stroke="#002b5c" stroke-width="2.400" stroke-linejoin="round"><rect x="2" y="2.500" width="15" height="15" rx="1"/><rect x="2" y="25" width="15" height="15" rx="1"/><rect x="24.500" y="25" width="15" height="15" rx="1"/><path d="M32 1.500l2.300 5.700 5.700 2.300-5.700 2.300-2.300 5.700-2.300-5.700-5.700-2.300 5.700-2.300z" fill="#fff"/></g></svg>
<span class="t" style="top:443.1px;font-size:27px;line-height:35px;color:#212121;letter-spacing:0.808px;left:790.50px;-webkit-text-stroke:0.9px #212121;">Übersicht</span>
<svg style="position:absolute;left:723px;top:535px;" width="42" height="42" viewBox="0 0 42 42"><g stroke="#3b9ad9" stroke-width="2.200" stroke-linejoin="round"><path d="M8 22V5.500a3 3 0 0 1 3-3h18l10 10v24.500a3 3 0 0 1-3 3H20" fill="#d2e9f9"/><path d="M11.500 22l2.500 6.200 6.200 2.500-6.200 2.500-2.500 6.200-2.500-6.200-6.200-2.500 6.200-2.500z" fill="#fff"/></g></svg>
<span class="t" style="top:539.6px;font-size:27px;line-height:35px;color:#212121;letter-spacing:0.806px;left:790.50px;">Dokumente</span>
<svg style="position:absolute;left:723px;top:632px;" width="42" height="40" viewBox="0 0 42 40"><g stroke="#4a55d6" stroke-width="2.900" fill="none" stroke-linecap="round"><circle cx="10.500" cy="7" r="4.800"/><circle cx="31.500" cy="7" r="4.800"/><circle cx="21" cy="22.500" r="4.800"/><path d="M2 24a8.500 8.500 0 0 1 14-6.500" fill="#e3e5fb"/><path d="M40 24a8.500 8.500 0 0 0-14-6.500" fill="#e3e5fb"/><path d="M12.500 38.500a8.500 8.500 0 0 1 17 0" fill="#e3e5fb"/></g></svg>
<span class="t" style="top:635.6px;font-size:27px;line-height:35px;color:#212121;letter-spacing:1.156px;left:792.50px;">Team</span>
<svg style="position:absolute;left:723px;top:727px;" width="42" height="42" viewBox="0 0 42 42"><g stroke="#1f1f1f" stroke-width="2.400" stroke-linecap="round" stroke-linejoin="round"><path d="M21 5.500A12 12 0 0 1 33 17.500V32H9V17.500A12 12 0 0 1 21 5.500z" fill="#b8b8b8"/><path d="M4.500 33h33" fill="none"/><path d="M17.500 39.500h7" fill="none"/><path d="M6.500 3.500A20 20 0 0 0 1.800 15M35.500 3.500A20 20 0 0 1 40.200 15" fill="none"/></g></svg>
<span class="t" style="top:731.6px;font-size:27px;line-height:35px;color:#212121;letter-spacing:0.608px;left:790.50px;">Benachrichtigungen</span>
<div style="position:absolute;left:696px;top:1726px;width:560px;height:2px;background:#d2d1d4;"></div>
<svg style="position:absolute;left:718.8px;top:1749.8px;" width="50.4" height="50.4" viewBox="0 0 50.4 50.4"><path fill="#585858" transform="scale(2.1)" d="M19.140 12.940c.040-.300.060-.610.060-.940 0-.320-.020-.640-.070-.940l2.030-1.580a.490.490 0 0 0 .120-.610l-1.920-3.320a.488.488 0 0 0-.590-.220l-2.390.960c-.500-.380-1.030-.700-1.620-.940l-.360-2.540a.484.484 0 0 0-.480-.410h-3.840c-.240 0-.430.170-.470.410l-.360 2.540c-.590.240-1.130.570-1.620.940l-2.390-.960c-.220-.080-.470 0-.590.220L2.740 8.870c-.120.210-.080.470.120.610l2.030 1.580c-.050.300-.090.630-.090.940s.020.640.070.940l-2.030 1.580a.490.490 0 0 0-.120.610l1.920 3.320c.120.220.370.290.590.220l2.390-.960c.500.380 1.030.700 1.620.940l.360 2.540c.050.240.240.410.480.410h3.840c.240 0 .440-.170.470-.410l.360-2.540c.590-.240 1.130-.560 1.620-.940l2.390.960c.220.080.470 0 .590-.220l1.920-3.320c.120-.220.070-.470-.120-.610l-2.010-1.580zM12 15.600c-1.980 0-3.600-1.620-3.600-3.600s1.620-3.600 3.600-3.600 3.600 1.620 3.600 3.600-1.620 3.600-3.600 3.600z"/></svg>
<span class="t" style="top:1759.1px;font-size:27px;line-height:35px;color:#212121;letter-spacing:0.650px;left:790.50px;">Projekteinstellungen</span>
<svg style="position:absolute;left:1193px;top:1763px;" width="30" height="26" viewBox="0 0 30 26"><path d="M13 2L3 13l10 11M26 2L16 13l10 11" fill="none" stroke="#4a4a4a" stroke-width="3.200" stroke-linejoin="miter"/></svg>
<div style="position:absolute;left:1258px;top:314px;width:1592px;height:1510px;background:#f4f3f5;"></div>
<div style="position:absolute;left:2849px;top:314px;width:31px;height:1510px;background:#faf9fb;"></div>
<div style="position:absolute;left:2856px;top:350px;width:18px;height:1412px;background:#8a898c;border-radius:9px;"></div>
<svg style="position:absolute;left:2856px;top:323px;" width="18" height="14" viewBox="0 0 18 14"><path d="M9 2L16.500 12.500H1.500z" fill="#8a898c" stroke="#8a898c" stroke-width="2" stroke-linejoin="round"/></svg>
<svg style="position:absolute;left:2856px;top:1801px;" width="18" height="14" viewBox="0 0 18 14"><path d="M9 12L16.500 1.500H1.500z" fill="#8a898c" stroke="#8a898c" stroke-width="2" stroke-linejoin="round"/></svg>
<span class="t" style="top:341.9px;font-size:40.5px;line-height:53px;color:#5b595c;letter-spacing:0.191px;left:1688.75px;-webkit-text-stroke:0.3px #5b595c;">Guten Tag. Schön, Sie wieder zu sehen.</span>
<div style="position:absolute;left:1304px;top:430px;width:1498px;height:292px;background:#fff;border-radius:9px;box-shadow:0 2px 3px rgba(0,0,0,.18),0 0 2px rgba(0,0,0,.10);overflow:hidden;"><div style="position:absolute;left:0;top:0;width:8px;height:292px;background:#a1c517;"></div><div style="position:absolute;left:0;top:96.500px;width:1498px;height:2px;background:#e6e5e8;"></div><div style="position:absolute;left:0;top:194.500px;width:1498px;height:2px;background:#e6e5e8;"></div></div>
<svg style="position:absolute;left:1358px;top:456.9px;" width="43" height="43" viewBox="0 0 43 43"><path d="M3.500 0H20.600L31.600 11.600V40H3.500A3.500 3.500 0 0 1 0 36.500V3.500A3.500 3.500 0 0 1 3.500 0z" fill="#9fbe14"/><path d="M18.200 3.200V13.400H28.800z" fill="#fff"/><circle cx="30.100" cy="29.200" r="10.600" fill="#fff" stroke="#9fbe14" stroke-width="3.400"/><path d="M30.100 22.500V30.200L35.300 33.200" fill="none" stroke="#9fbe14" stroke-width="2.800"/></svg>
<span class="t" style="top:454.5px;font-size:36.5px;line-height:47px;color:#5f5b62;letter-spacing:-0.028px;left:1430.50px;-webkit-text-stroke:1.0px #5f5b62;">Tägliches Änderungsprotokoll</span>
<span class="t" style="top:461.5px;font-size:27px;line-height:35px;color:#5f5b62;letter-spacing:0.454px;left:2463.00px;">01.12.2025 00:00</span>
<svg style="position:absolute;left:2728.2px;top:460.3px" width="32" height="36"><use href="#trash" width="32" height="36"/></svg>
<svg style="position:absolute;left:1358px;top:554.6px;" width="43" height="43" viewBox="0 0 43 43"><path d="M3.500 0H20.600L31.600 11.600V40H3.500A3.500 3.500 0 0 1 0 36.500V3.500A3.500 3.500 0 0 1 3.500 0z" fill="#9fbe14"/><path d="M18.200 3.200V13.400H28.800z" fill="#fff"/><circle cx="30.100" cy="29.200" r="10.600" fill="#fff" stroke="#9fbe14" stroke-width="3.400"/><path d="M30.100 22.500V30.200L35.300 33.200" fill="none" stroke="#9fbe14" stroke-width="2.800"/></svg>
<span class="t" style="top:552.2px;font-size:36.5px;line-height:47px;color:#5f5b62;letter-spacing:-0.028px;left:1430.50px;-webkit-text-stroke:1.0px #5f5b62;">Tägliches Änderungsprotokoll</span>
<span class="t" style="top:559.2px;font-size:27px;line-height:35px;color:#5f5b62;letter-spacing:0.588px;left:2463.00px;">30.11.2025 00:00</span>
<svg style="position:absolute;left:2728.2px;top:558.0px" width="32" height="36"><use href="#trash" width="32" height="36"/></svg>
<svg style="position:absolute;left:1358px;top:648.6px;" width="42" height="49" viewBox="0 0 42 49"><path d="M12.300 0H27L40.200 13.400V36A4 4 0 0 1 36.200 40H12.300A4 4 0 0 1 8.300 36V4A4 4 0 0 1 12.300 0z" fill="#9fbe14"/><path d="M26.600 2.800V14H37z" fill="#fff"/><path d="M1.850 7.900V43.500A3 3 0 0 0 4.850 46.500H36.100" fill="none" stroke="#9fbe14" stroke-width="3.700"/></svg>
<span class="t" style="top:650.0px;font-size:36.5px;line-height:47px;color:#5f5b62;letter-spacing:0.085px;left:1428.50px;-webkit-text-stroke:1.0px #5f5b62;">mal schauen</span>
<span class="t" style="top:657.0px;font-size:27px;line-height:35px;color:#5f5b62;letter-spacing:0.588px;left:2463.00px;">29.11.2025 23:52</span>
<span class="t" style="top:657.0px;font-size:27px;line-height:35px;color:#212121;letter-spacing:0.288px;left:2097px;">Peter  Schmitter (extern<span style="letter-spacing:-1.800px">...</span></span>
<svg style="position:absolute;left:2728.2px;top:655.8px" width="32" height="36"><use href="#trash" width="32" height="36"/></svg>
<span class="t" style="top:770.0px;font-size:41px;line-height:53px;color:#212121;font-weight:700;letter-spacing:-0.539px;left:1905.00px;">Dateiaustausch</span>
<span class="t" style="top:893.0px;font-size:27.5px;line-height:36px;color:#1976d2;letter-spacing:1.214px;left:1303.00px;-webkit-text-stroke:0.8px #1976d2;">Portal</span>
<div style="position:absolute;left:1304px;top:949px;width:266px;height:322px;background:#fefdfe;border-radius:9px;box-shadow:0 2px 3px rgba(0,0,0,.18),0 0 2px rgba(0,0,0,.10);"></div>
<span class="t" style="top:982.0px;font-size:35.5px;line-height:46px;color:#616161;letter-spacing:-0.379px;left:1346.5px;">01_Pr<span style="letter-spacing:-2.600px">...</span></span>
<svg style="position:absolute;left:1481px;top:982px" width="46" height="46"><use href="#openNew" width="46" height="46"/></svg>
<svg style="position:absolute;left:1367px;top:1052.7px" width="140" height="140"><use href="#folder" width="140" height="140"/></svg>
<span class="t" style="top:1199.5px;font-size:28px;line-height:36px;color:#616161;letter-spacing:-0.189px;left:1332.25px;">Dateien ansehen</span>
<div style="position:absolute;left:1612px;top:949px;width:266px;height:322px;background:#fefdfe;border-radius:9px;box-shadow:0 2px 3px rgba(0,0,0,.18),0 0 2px rgba(0,0,0,.10);"></div>
<span class="t" style="top:982.0px;font-size:35.5px;line-height:46px;color:#616161;letter-spacing:-0.388px;left:1654.5px;">02_A<span style="letter-spacing:-2.600px">...</span></span>
<svg style="position:absolute;left:1789px;top:982px" width="46" height="46"><use href="#openNew" width="46" height="46"/></svg>
<svg style="position:absolute;left:1675px;top:1052.7px" width="140" height="140"><use href="#folder" width="140" height="140"/></svg>
<span class="t" style="top:1199.5px;font-size:28px;line-height:36px;color:#616161;letter-spacing:-0.189px;left:1640.25px;">Dateien ansehen</span>
<div style="position:absolute;left:1920px;top:949px;width:266px;height:322px;background:#fefdfe;border-radius:9px;box-shadow:0 2px 3px rgba(0,0,0,.18),0 0 2px rgba(0,0,0,.10);"></div>
<span class="t" style="top:982.0px;font-size:35.5px;line-height:46px;color:#616161;letter-spacing:-0.667px;left:1962.5px;">03_D<span style="letter-spacing:-2.600px">...</span></span>
<svg style="position:absolute;left:2097px;top:982px" width="46" height="46"><use href="#openNew" width="46" height="46"/></svg>
<svg style="position:absolute;left:1983px;top:1052.7px" width="140" height="140"><use href="#folder" width="140" height="140"/></svg>
<span class="t" style="top:1199.5px;font-size:28px;line-height:36px;color:#616161;letter-spacing:-0.189px;left:1948.25px;">Dateien ansehen</span>
<div style="position:absolute;left:2228px;top:949px;width:266px;height:322px;background:#fefdfe;border-radius:9px;box-shadow:0 2px 3px rgba(0,0,0,.18),0 0 2px rgba(0,0,0,.10);"></div>
<span class="t" style="top:982.0px;font-size:35.5px;line-height:46px;color:#616161;letter-spacing:-0.674px;left:2270.5px;">04_E<span style="letter-spacing:-2.600px">...</span></span>
<svg style="position:absolute;left:2405px;top:982px" width="46" height="46"><use href="#openNew" width="46" height="46"/></svg>
<svg style="position:absolute;left:2291px;top:1052.7px" width="140" height="140"><use href="#folder" width="140" height="140"/></svg>
<span class="t" style="top:1199.5px;font-size:28px;line-height:36px;color:#616161;letter-spacing:-0.189px;left:2256.25px;">Dateien ansehen</span>
<div style="position:absolute;left:2536px;top:949px;width:266px;height:322px;background:#fefdfe;border-radius:9px;box-shadow:0 2px 3px rgba(0,0,0,.18),0 0 2px rgba(0,0,0,.10);"></div>
<span class="t" style="top:982.0px;font-size:35.5px;line-height:46px;color:#616161;letter-spacing:-0.734px;left:2578.5px;">05_Q<span style="letter-spacing:-2.600px">...</span></span>
<svg style="position:absolute;left:2713px;top:982px" width="46" height="46"><use href="#openNew" width="46" height="46"/></svg>
<svg style="position:absolute;left:2599px;top:1052.7px" width="140" height="140"><use href="#folder" width="140" height="140"/></svg>
<span class="t" style="top:1199.5px;font-size:28px;line-height:36px;color:#616161;letter-spacing:-0.189px;left:2564.25px;">Dateien ansehen</span>
<div style="position:absolute;left:1304px;top:1313px;width:266px;height:322px;background:#fefdfe;border-radius:9px;box-shadow:0 2px 3px rgba(0,0,0,.18),0 0 2px rgba(0,0,0,.10);"></div>
<span class="t" style="top:1346.0px;font-size:35.5px;line-height:46px;color:#616161;letter-spacing:-0.388px;left:1346.5px;">06_B<span style="letter-spacing:-2.600px">...</span></span>
<svg style="position:absolute;left:1481px;top:1346px" width="46" height="46"><use href="#openNew" width="46" height="46"/></svg>
<svg style="position:absolute;left:1367px;top:1416.7px" width="140" height="140"><use href="#folder" width="140" height="140"/></svg>
<span class="t" style="top:1563.5px;font-size:28px;line-height:36px;color:#616161;letter-spacing:-0.189px;left:1332.25px;">Dateien ansehen</span>
<div style="position:absolute;left:1612px;top:1313px;width:266px;height:322px;background:#fefdfe;border-radius:9px;box-shadow:0 2px 3px rgba(0,0,0,.18),0 0 2px rgba(0,0,0,.10);"></div>
<span class="t" style="top:1346.0px;font-size:35.5px;line-height:46px;color:#616161;letter-spacing:-0.388px;left:1654.5px;">07_V<span style="letter-spacing:-2.600px">...</span></span>
<svg style="position:absolute;left:1789px;top:1346px" width="46" height="46"><use href="#openNew" width="46" height="46"/></svg>
<svg style="position:absolute;left:1675px;top:1416.7px" width="140" height="140"><use href="#folder" width="140" height="140"/></svg>
<span class="t" style="top:1563.5px;font-size:28px;line-height:36px;color:#616161;letter-spacing:-0.189px;left:1640.25px;">Dateien ansehen</span>
<div style="position:absolute;left:1920px;top:1313px;width:266px;height:322px;background:#fefdfe;border-radius:9px;box-shadow:0 2px 3px rgba(0,0,0,.18),0 0 2px rgba(0,0,0,.10);"></div>
<span class="t" style="top:1346.0px;font-size:35.5px;line-height:46px;color:#616161;letter-spacing:-0.388px;left:1962.5px;">08_K<span style="letter-spacing:-2.600px">...</span></span>
<svg style="position:absolute;left:2097px;top:1346px" width="46" height="46"><use href="#openNew" width="46" height="46"/></svg>
<svg style="position:absolute;left:1983px;top:1416.7px" width="140" height="140"><use href="#folder" width="140" height="140"/></svg>
<span class="t" style="top:1563.5px;font-size:28px;line-height:36px;color:#616161;letter-spacing:-0.189px;left:1948.25px;">Dateien ansehen</span>
<div style="position:absolute;left:2228px;top:1313px;width:266px;height:322px;background:#fefdfe;border-radius:9px;box-shadow:0 2px 3px rgba(0,0,0,.18),0 0 2px rgba(0,0,0,.10);"></div>
<span class="t" style="top:1346.0px;font-size:35.5px;line-height:46px;color:#616161;letter-spacing:-0.525px;left:2270.5px;">09_D<span style="letter-spacing:-2.600px">...</span></span>
<svg style="position:absolute;left:2405px;top:1346px" width="46" height="46"><use href="#openNew" width="46" height="46"/></svg>
<svg style="position:absolute;left:2291px;top:1416.7px" width="140" height="140"><use href="#folder" width="140" height="140"/></svg>
<span class="t" style="top:1563.5px;font-size:28px;line-height:36px;color:#616161;letter-spacing:-0.189px;left:2256.25px;">Dateien ansehen</span>
</div></body></html>
